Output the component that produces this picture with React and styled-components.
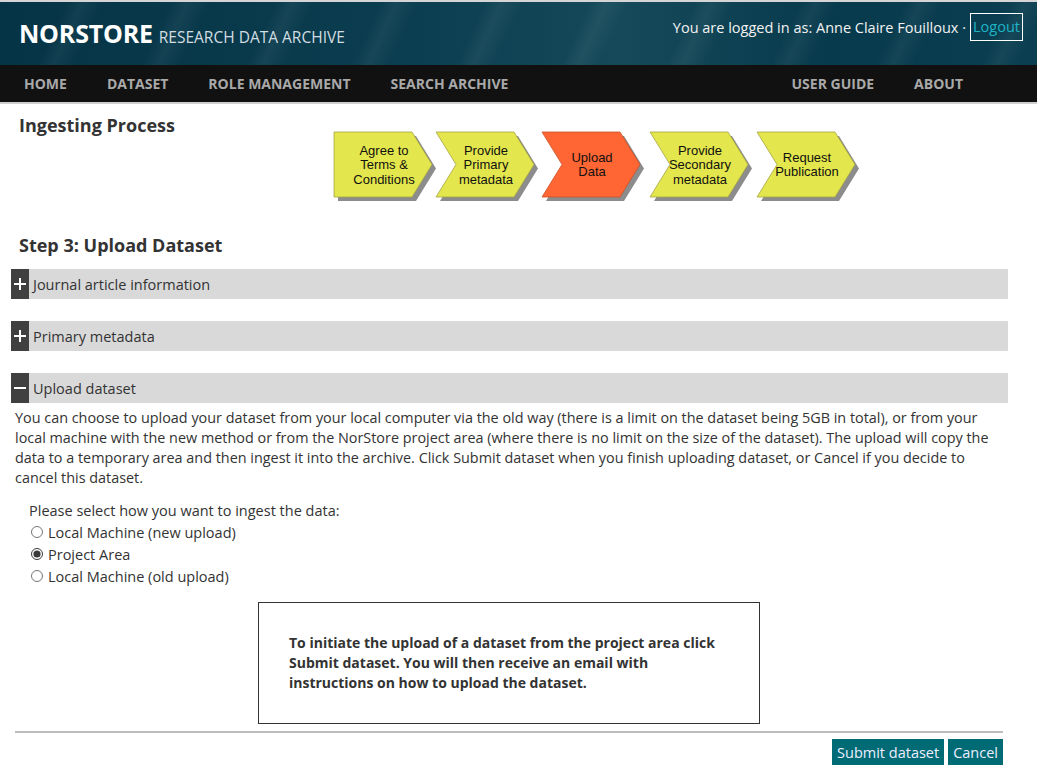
import React, { useState } from "react";
import styled, { createGlobalStyle } from "styled-components";

const GlobalStyle = createGlobalStyle`
  body {
    margin: 0;
    background: #fff;
    font-family: "Open Sans", "Liberation Sans", sans-serif;
    color: #333;
  }
`;

const Page = styled.div`
  width: 1037px;
`;

const Header = styled.header`
  height: 63px;
  border-top: 2px solid #d5d5d5;
  display: flex;
  align-items: flex-start;
  justify-content: space-between;
  padding: 0 14px 0 19px;
  background:
    repeating-linear-gradient(
      115deg,
      rgba(255, 255, 255, 0) 0px,
      rgba(255, 255, 255, 0) 60px,
      rgba(255, 255, 255, 0.05) 75px,
      rgba(255, 255, 255, 0) 95px
    ),
    linear-gradient(90deg, #053446 0%, #0b3e50 40%, #164a5a 60%, #073a4c 80%, #0a3e50 100%);
`;

const Brand = styled.div`
  margin-top: 14px;
  display: flex;
  align-items: baseline;
  gap: 6px;
`;

const BrandName = styled.span`
  font-size: 25px;
  font-weight: 700;
  color: #fff;
  letter-spacing: -0.2px;
`;

const BrandSub = styled.span`
  font-size: 15.5px;
  color: #d3dde1;
`;

const UserBox = styled.div`
  margin-top: 11px;
  display: flex;
  align-items: center;
  gap: 4px;
  font-size: 14.5px;
  color: #f2f2f2;
`;

const Logout = styled.a`
  border: 1px solid #fff;
  padding: 3px 2px 4px;
  color: #1eb4c6;
  text-decoration: none;
`;

const Nav = styled.nav`
  height: 37px;
  background: #111;
  border-bottom: 2px solid #cfcfcf;
  display: flex;
  align-items: center;
  padding: 0 54px 0 4px;
`;

const NavItem = styled.a`
  padding: 0 20px;
  font-size: 14px;
  font-weight: 700;
  color: #a9a9a9;
  text-decoration: none;
  margin-left: ${(p) => (p.push ? "auto" : "0")};
`;

const Main = styled.main`
  padding: 0 29px 0 11px;
`;

const TopRow = styled.div`
  display: flex;
  align-items: flex-start;
`;

const PageTitle = styled.h2`
  width: 313px;
  margin: 9px 0 0 8px;
  font-size: 18px;
  font-weight: 700;
  color: #333;
`;

const ProcessSvg = styled.svg`
  margin-top: 26px;
  display: block;
`;

const StepTitle = styled.h2`
  margin: 28px 0 12px 8px;
  font-size: 18px;
  font-weight: 700;
  color: #333;
`;

const Section = styled.div`
  margin-bottom: ${(p) => (p.open ? "0" : "22px")};
`;

const Bar = styled.div`
  height: 30px;
  background: #d9d9d9;
  display: flex;
  align-items: center;
  gap: 4px;
  font-size: 14.5px;
  color: #333;
  cursor: pointer;
`;

const Toggle = styled.span`
  width: 18px;
  height: 30px;
  background: #404040;
  display: flex;
  align-items: center;
  justify-content: center;
`;

const Intro = styled.p`
  margin: 5px 0 0 4px;
  font-size: 14.4px;
  line-height: 20px;
  color: #333;
`;

const Choice = styled.div`
  margin: 13px 0 0 18px;
  font-size: 14.5px;
  color: #333;
`;

const ChoiceLabel = styled.div`
  line-height: 20px;
`;

const Option = styled.label`
  display: flex;
  align-items: center;
  height: 22px;
  gap: 5px;

  input {
    margin: 0 0 0 2px;
    width: 12px;
    height: 12px;
    accent-color: #3a3a3a;
  }
`;

const InfoBox = styled.div`
  width: 440px;
  margin: 15px 0 0 247px;
  border: 1px solid #333;
  padding: 30px;
  font-size: 14px;
  font-weight: 700;
  line-height: 20px;
  color: #333;
`;

const Rule = styled.hr`
  margin: 7px 5px 0 4px;
  border: 0;
  border-top: 2px solid #bdbdbd;
`;

const Actions = styled.div`
  display: flex;
  justify-content: flex-end;
  gap: 4px;
  margin: 6px 5px 0 0;
`;

const Button = styled.button`
  background: #006b75;
  color: #eef;
  border: 0;
  height: 26px;
  padding: 0 5px;
  font-family: "Open Sans", "Liberation Sans", sans-serif;
  font-size: 14.5px;
  cursor: pointer;
`;

function Chevron({ x, first, active, lines }) {
  const w = 78;
  const tip = 20;
  const top = 2;
  const bot = 67;
  const mid = (top + bot) / 2;
  const pts = [
    [x, top],
    [x + w, top],
    [x + w + tip, mid],
    [x + w, bot],
    [x, bot],
    first ? [x, mid] : [x + tip, mid],
  ]
    .map((p) => p.join(","))
    .join(" ");
  const cx = x + 50;
  const startY = mid - ((lines.length - 1) * 14.5) / 2 + 4.5;
  return (
    <g>
      <polygon points={pts} fill="#8c8c8c" transform="translate(4,4)" />
      <polygon
        points={pts}
        fill={active ? "#ff6633" : "#e3e64c"}
        stroke={active ? "#c9502a" : "#a5a545"}
        strokeWidth="0.8"
      />
      {lines.map((l, i) => (
        <text
          key={l}
          x={cx}
          y={startY + i * 14.5}
          textAnchor="middle"
          fontFamily="'Liberation Sans', Arial, sans-serif"
          fontSize="13"
          fill="#111"
        >
          {l}
        </text>
      ))}
    </g>
  );
}

const steps = [
  { x: 2, lines: ["Agree to", "Terms &", "Conditions"], first: true },
  { x: 104, lines: ["Provide", "Primary", "metadata"] },
  { x: 210, lines: ["Upload", "Data"], active: true },
  { x: 318, lines: ["Provide", "Secondary", "metadata"] },
  { x: 425, lines: ["Request", "Publication"] },
];

function PlusMinus({ open }) {
  return (
    <svg width="12" height="12" viewBox="0 0 12 12">
      <rect x="0" y="5" width="12" height="2" fill="#fff" />
      {!open && <rect x="5" y="0" width="2" height="12" fill="#fff" />}
    </svg>
  );
}

export default function App() {
  const [method, setMethod] = useState("project");

  return (
    <Page>
      <GlobalStyle />
      <Header>
        <Brand>
          <BrandName>NORSTORE</BrandName>
          <BrandSub>RESEARCH DATA ARCHIVE</BrandSub>
        </Brand>
        <UserBox>
          <span>You are logged in as: Anne Claire Fouilloux ·</span>
          <Logout href="#">Logout</Logout>
        </UserBox>
      </Header>
      <Nav>
        <NavItem href="#">HOME</NavItem>
        <NavItem href="#">DATASET</NavItem>
        <NavItem href="#">ROLE MANAGEMENT</NavItem>
        <NavItem href="#">SEARCH ARCHIVE</NavItem>
        <NavItem href="#" push>USER GUIDE</NavItem>
        <NavItem href="#">ABOUT</NavItem>
      </Nav>

      <Main>
        <TopRow>
          <PageTitle>Ingesting Process</PageTitle>
          <ProcessSvg width="535" height="75" viewBox="0 0 535 75">
            {steps.map((s) => (
              <Chevron key={s.x} {...s} />
            ))}
          </ProcessSvg>
        </TopRow>

        <StepTitle>Step 3: Upload Dataset</StepTitle>

        <Section>
          <Bar>
            <Toggle><PlusMinus /></Toggle>
            Journal article information
          </Bar>
        </Section>
        <Section>
          <Bar>
            <Toggle><PlusMinus /></Toggle>
            Primary metadata
          </Bar>
        </Section>
        <Section open>
          <Bar>
            <Toggle><PlusMinus open /></Toggle>
            Upload dataset
          </Bar>
          <Intro>
            You can choose to upload your dataset from your local computer via the old way (there
            is a limit on the dataset being 5GB in total), or from your local machine with the new
            method or from the NorStore project area (where there is no limit on the size of the
            dataset). The upload will copy the data to a temporary area and then ingest it into the
            archive. Click Submit dataset when you finish uploading dataset, or Cancel if you decide
            to cancel this dataset.
          </Intro>
          <Choice>
            <ChoiceLabel>Please select how you want to ingest the data:</ChoiceLabel>
            <Option>
              <input
                type="radio"
                name="method"
                checked={method === "new"}
                onChange={() => setMethod("new")}
              />
              Local Machine (new upload)
            </Option>
            <Option>
              <input
                type="radio"
                name="method"
                checked={method === "project"}
                onChange={() => setMethod("project")}
              />
              Project Area
            </Option>
            <Option>
              <input
                type="radio"
                name="method"
                checked={method === "old"}
                onChange={() => setMethod("old")}
              />
              Local Machine (old upload)
            </Option>
          </Choice>
          <InfoBox>
            To initiate the upload of a dataset from the project area click Submit dataset. You
            will then receive an email with instructions on how to upload the dataset.
          </InfoBox>
          <Rule />
          <Actions>
            <Button>Submit dataset</Button>
            <Button>Cancel</Button>
          </Actions>
        </Section>
      </Main>
    </Page>
  );
}
